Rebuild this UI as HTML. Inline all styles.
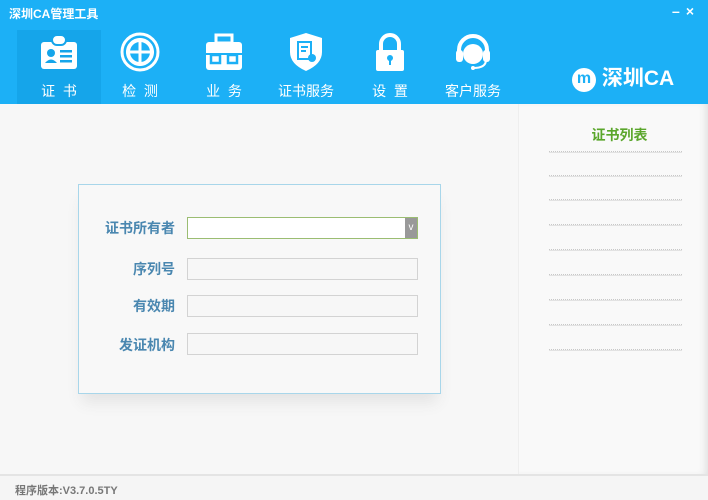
<!DOCTYPE html>
<html><head><meta charset="utf-8"><style>
*{margin:0;padding:0;box-sizing:border-box}
body{width:708px;height:500px;overflow:hidden;background:#f7f7f7;font-family:"Liberation Sans","Noto Sans CJK SC",sans-serif;position:relative}
.hdr{position:absolute;left:0;top:0;width:708px;height:104px;background:#1cb0f6}
.title{position:absolute;left:9px;top:5px;color:#fff;font-size:12px;font-weight:bold;z-index:5}
.ctl{position:absolute;right:8px;top:3px;color:#fff;font-size:14px;font-weight:bold;letter-spacing:6px}
.tab{position:absolute;top:0;width:84px;height:104px;text-align:center;color:#fff}
.tab.act::before{content:"";position:absolute;left:0;top:30px;width:100%;height:74px;background:#15a5ea}
.tab svg{position:absolute;left:22px;top:32px}
.tab span{position:absolute;left:0;width:100%;top:81px;font-size:14px}
.logo{position:absolute;left:572px;top:62px;color:#fff;font-size:21px;font-weight:bold}
.right{position:absolute;left:518px;top:104px;width:190px;height:370px;background:#f9f9f9;box-shadow:-6px 0 8px -4px #ddd inset;border-left:1px solid #eee}
.rt{position:absolute;left:0;width:100%;top:21px;text-align:center;color:#5aa62b;font-weight:bold;font-size:14px;padding-left:12px}
.ln{position:absolute;left:30px;width:133px;border-top:1px dotted #c8c8c8;height:2px;border-bottom:1px solid #e2e2e2}
.box{position:absolute;left:78px;top:184px;width:363px;height:210px;border:1px solid #a8d6ea;background:#f8f8f8;box-shadow:0 12px 14px -4px #e3e3e3}
.lb{position:absolute;right:265px;font-size:14px;font-weight:bold;color:#4a87b0;text-align:right;white-space:nowrap}
.in{position:absolute;left:108px;width:231px;height:22px;border:1px solid #d3d3d3;background:#f7f7f7}
.foot{position:absolute;left:0;top:474px;width:708px;height:26px;border-top:2px solid #e4e4e4;background:#f5f5f5}
.foot span{position:absolute;left:15px;top:6px;font-size:11px;font-weight:bold;color:#777}
</style></head><body>
<div class="hdr">
<div class="tab act" style="left:17px"><svg width="40" height="40" viewBox="0 0 40 40"><rect x="2" y="10" width="36" height="27" rx="3" fill="#fff"/><rect x="13" y="3" width="14" height="10" rx="5" fill="#fff" stroke="#15a5ea" stroke-width="2"/><circle cx="12" cy="21" r="4" fill="#15a5ea"/><path d="M6 31q6-7 12 0z" fill="#15a5ea"/><rect x="21" y="18" width="12" height="2.5" fill="#15a5ea"/><rect x="21" y="23" width="12" height="2.5" fill="#15a5ea"/><rect x="21" y="28" width="12" height="2.5" fill="#15a5ea"/></svg><span>证&nbsp;&nbsp;书</span></div>
<div class="tab" style="left:98px"><svg width="40" height="40" viewBox="0 0 40 40"><circle cx="20" cy="20" r="18" fill="none" stroke="#fff" stroke-width="3"/><circle cx="20" cy="20" r="12" fill="none" stroke="#fff" stroke-width="4"/><path d="M20 6v28M6 20h28" stroke="#fff" stroke-width="3"/></svg><span>检&nbsp;&nbsp;测</span></div>
<div class="tab" style="left:182px"><svg width="40" height="40" viewBox="0 0 40 40"><rect x="12" y="3" width="16" height="8" fill="none" stroke="#fff" stroke-width="3"/><rect x="2" y="10" width="36" height="28" rx="3" fill="#fff"/><path d="M2 22h36" stroke="#1cb0f6" stroke-width="2"/><rect x="7" y="23" width="9" height="8" fill="none" stroke="#1cb0f6" stroke-width="2.5"/><rect x="24" y="23" width="9" height="8" fill="none" stroke="#1cb0f6" stroke-width="2.5"/></svg><span>业&nbsp;&nbsp;务</span></div>
<div class="tab" style="left:264px"><svg width="40" height="40" viewBox="0 0 40 40"><path d="M20 1l16 5v14q0 12-16 19Q4 32 4 20V6z" fill="#fff"/><rect x="12" y="10" width="13" height="17" fill="none" stroke="#1cb0f6" stroke-width="2"/><path d="M15 15h7M15 19h5" stroke="#1cb0f6" stroke-width="2"/><circle cx="26" cy="26" r="4" fill="#1cb0f6"/></svg><span>证书服务</span></div>
<div class="tab" style="left:348px"><svg width="40" height="40" viewBox="0 0 40 40"><path d="M11 19v-7a9 9 0 0 1 18 0v7" fill="none" stroke="#fff" stroke-width="4"/><rect x="6" y="18" width="28" height="21" rx="2" fill="#fff"/><circle cx="20" cy="26" r="3" fill="#1cb0f6"/><rect x="19" y="27" width="2" height="6" fill="#1cb0f6"/></svg><span>设&nbsp;&nbsp;置</span></div>
<div class="tab" style="left:431px"><svg width="40" height="40" viewBox="0 0 40 40"><path d="M6 22v-4a14 14 0 0 1 28 0v4" fill="none" stroke="#fff" stroke-width="4"/><rect x="3" y="18" width="7" height="12" rx="3" fill="#fff"/><rect x="30" y="18" width="7" height="12" rx="3" fill="#fff"/><circle cx="20" cy="22" r="10" fill="#fff"/><path d="M33 28q0 8-13 8" fill="none" stroke="#fff" stroke-width="2"/><circle cx="20" cy="36" r="2" fill="#fff"/></svg><span>客户服务</span></div>
<div class="title">深圳CA管理工具</div>
<div class="ctl">–×</div>
<div class="logo"><span style="display:inline-block;width:24px;height:24px;border-radius:50%;background:#fff;color:#1cb0f6;font-size:16px;text-align:center;line-height:22px;vertical-align:2px">m</span> 深圳CA</div>
</div>
<div class="right"><div class="rt">证书列表</div>
<div class="ln" style="top:47px"></div><div class="ln" style="top:71px"></div><div class="ln" style="top:95px"></div><div class="ln" style="top:120px"></div><div class="ln" style="top:145px"></div><div class="ln" style="top:170px"></div><div class="ln" style="top:195px"></div><div class="ln" style="top:220px"></div><div class="ln" style="top:245px"></div></div>
<div class="box">
<div class="lb" style="top:33px">证书所有者</div>
<div class="in" style="top:32px;border-color:#9bbd72;background:#fff"><div style="position:absolute;right:0;top:0;width:12px;height:20px;background:#999;color:#fff;font-size:10px;text-align:center;line-height:20px">v</div></div>
<div class="lb" style="top:74px">序列号</div><div class="in" style="top:73px"></div>
<div class="lb" style="top:111px">有效期</div><div class="in" style="top:110px"></div>
<div class="lb" style="top:150px">发证机构</div><div class="in" style="top:148px"></div>
</div>
<div class="foot"><span>程序版本:V3.7.0.5TY</span></div>
</body></html>
